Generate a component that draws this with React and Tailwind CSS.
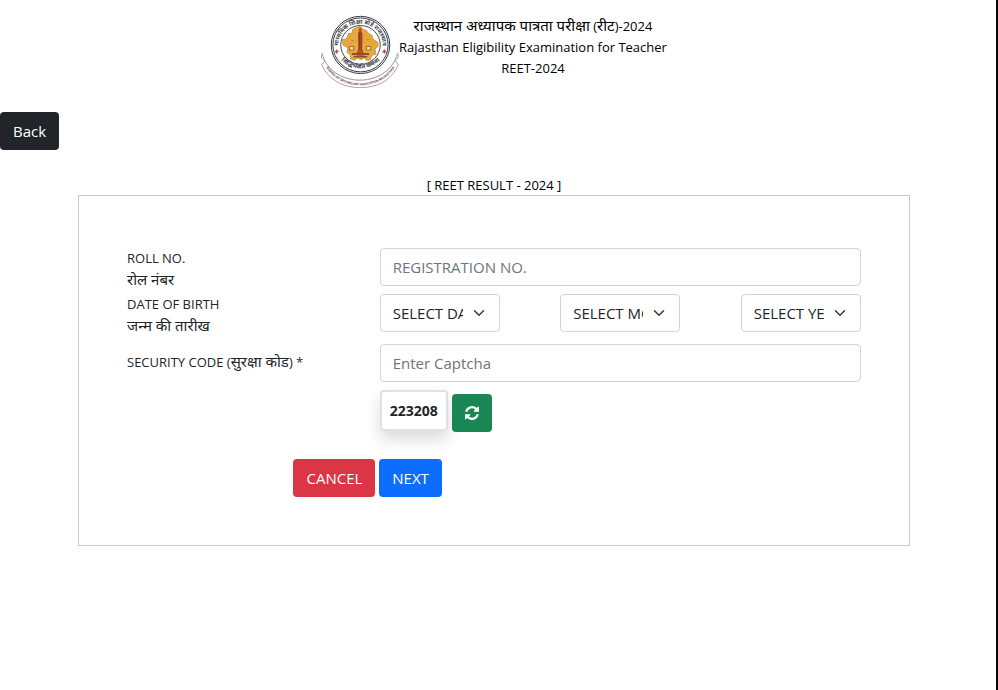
import React from 'react';

const controlClass = 'h-[38px] rounded border border-[#ced4da] bg-white px-3 text-[15px] leading-6 text-[#212529]';
const buttonClass = 'h-[38px] rounded border border-transparent bg-origin-border px-3 text-[15px] leading-6 text-white';

const selects = [
  { id: 'day', label: 'SELECT DAY' },
  { id: 'month', label: 'SELECT MONTH' },
  { id: 'year', label: 'SELECT YEAR' },
];

const Hindi = ({ children }) => <span lang="hi" className="text-[15px]">{children}</span>;

const BoardLogo = () => (
  <svg className="h-[74px] w-[78px] shrink-0" viewBox="15 13 237 225" role="img" aria-label="Board of Secondary Education Rajasthan">
    <defs>
      <path id="ringTop" d="M74 136 A67 66 0 1 1 196 136" />
      <path id="ringBottom" d="M60 126 A79 77 0 0 0 210 126" />
      <path id="ribbonText" d="M29 172 C72 249 196 249 241 172" />
    </defs>
    <path d="M18 133 C32 183 76 213 133 214 C192 213 234 180 248 133 L251 143 L241 154 L250 168 C226 218 186 236 133 237 C80 236 39 214 17 168 L26 156 L16 146 Z" fill="#fff" stroke="#8d9295" strokeWidth="2.5" />
    <path d="M26 156 C46 193 86 214 133 215 C182 214 222 191 241 154" fill="none" stroke="#aaa" strokeWidth="1.5" />
    <text fontFamily="Liberation Sans, sans-serif" fontWeight="700" fontSize="10" fill="#6c3035" textAnchor="middle">
      <textPath href="#ribbonText" startOffset="50%">BOARD OF SECONDARY EDUCATION RAJASTHAN</textPath>
    </text>
    <ellipse cx="135" cy="107" rx="89" ry="87" fill="#fff" stroke="#343840" strokeWidth="3" />
    <ellipse cx="135" cy="107" rx="84" ry="82" fill="none" stroke="#343840" strokeWidth="3" />
    <ellipse cx="135" cy="107" rx="60" ry="59" fill="#fff" stroke="#444950" strokeWidth="3" />
    <g fontFamily="Noto Sans, sans-serif" fontWeight="700" fontSize="18" fill="#3c3f48" textAnchor="middle">
      <text><textPath href="#ringTop" startOffset="50%">माध्यमिक शिक्षा बोर्ड राजस्थान</textPath></text>
      <text><textPath href="#ringBottom" startOffset="50%">सिद्धिर्भवति कर्मजा</textPath></text>
    </g>
    <path d="M57 127h11M62.500 121v12M202 127h11M207.500 121v12" stroke="#b6424b" strokeWidth="4" />
    <g transform="translate(-11 -7) scale(1.08)">
      <path d="M84 91 L96 88 L101 74 L112 72 L113 62 L126 55 L136 54 L142 62 L151 64 L158 73 L168 79 L170 89 L184 98 L185 109 L176 117 L179 132 L167 135 L163 148 L151 149 L148 141 L137 147 L126 143 L119 149 L107 145 L106 132 L97 127 L100 114 L86 106 Z" fill="#e6a73c" stroke="#b98a38" strokeWidth="2" />
      <path d="M132 57h5l2 12 2 6-1 42 4 9v10h-19v-10l4-9-1-42 2-7z" fill="#b95023" />
      <path d="M132 70v49M137 70v49" stroke="#713220" strokeWidth="2" />
      <path d="M111 128h48v6h-48zM116 137h38v4h-38z" fill="#8a4f2b" />
      <path d="M104 110h12v10h-12zM152 110h12v10h-12z" fill="#f6dfa4" stroke="#7a4b2a" strokeWidth="2" />
      <path d="M109 94h9M152 91h9" stroke="#c98430" strokeWidth="3" />
    </g>
  </svg>
);

const Header = () => (
  <header className="flex justify-center pt-[14px] text-black">
    <BoardLogo />
    <div className="pt-px text-center text-[13px] leading-[21px]">
      <p><Hindi>राजस्थान अध्यापक पात्रता परीक्षा</Hindi> (<Hindi>रीट</Hindi>)-2024</p>
      <p>Rajasthan Eligibility Examination for Teacher</p>
      <p>REET-2024</p>
    </div>
  </header>
);

const RefreshIcon = () => (
  <svg className="h-[14px] w-[14px]" viewBox="0 0 1536 1536" fill="currentColor" aria-hidden="true">
    <path d="M1511 928q0 5-1 7-64 268-268 434.5t-478 166.5q-146 0-282.5-55t-243.5-157l-129 129q-19 19-45 19t-45-19-19-45v-448q0-26 19-45t45-19h448q26 0 45 19t19 45-19 45l-137 137q71 66 161 102t187 36q134 0 250-65t186-179q11-17 53-117 8-23 30-23h192q13 0 22.5 9.5t9.5 22.5zm25-800v448q0 26-19 45t-45 19h-448q-26 0-45-19t-19-45 19-45l138-138q-148-137-349-137-134 0-250 65t-186 179q-11 17-53 117-8 23-30 23h-199q-13 0-22.5-9.5t-9.5-22.5v-7q65-268 270-434.5t480-166.5q146 0 284 55.5t245 156.5l130-129q19-19 45-19t45 19 19 45z" />
  </svg>
);

const DateSelect = ({ id, label }) => (
  <div className="grid w-1/4">
    <select id={id} aria-label={label} className={`${controlClass} col-start-1 row-start-1 w-full appearance-none pr-9`}>
      <option>{label}</option>
    </select>
    <svg className="pointer-events-none col-start-1 row-start-1 mr-[15px] h-3 w-3 self-center justify-self-end" viewBox="0 0 16 16" fill="none" stroke="#343a40" strokeWidth="2" strokeLinecap="round" strokeLinejoin="round" aria-hidden="true">
      <path d="m2 5 6 6 6-6" />
    </svg>
  </div>
);

const ResultForm = () => (
  <form className="border border-[#c8c8c8] px-9 pt-[52px] pb-12 text-[#212529]" onSubmit={(e) => e.preventDefault()}>
    <div className="grid grid-cols-3">
      <label htmlFor="roll" className="h-[46px] px-3 text-[13px] leading-[21px]">
        ROLL NO.<br /><Hindi>रोल नंबर</Hindi>
      </label>
      <div className="col-span-2 px-3">
        <input id="roll" type="text" placeholder="REGISTRATION NO." className={`${controlClass} w-full placeholder:text-[#6c757d]`} />
      </div>

      <label htmlFor="day" className="h-[50px] px-3 text-[13px] leading-[21px]">
        DATE OF BIRTH<br /><Hindi>जन्म की तारीख</Hindi>
      </label>
      <div className="col-span-2 flex items-start justify-between px-3">
        {selects.map((s) => (
          <DateSelect key={s.id} id={s.id} label={s.label} />
        ))}
      </div>

      <label htmlFor="captcha" className="px-3 pt-[7px] text-[13px] leading-[21px]">
        SECURITY CODE (<Hindi>सुरक्षा कोड</Hindi>) *
      </label>
      <div className="col-span-2 px-3">
        <input id="captcha" type="text" placeholder="Enter Captcha" className={`${controlClass} w-full placeholder:text-[#6c757d]`} />
        <div className="flex items-start gap-1 pt-2">
          <span className="rounded border-2 border-[#dee2e6] bg-white p-2 text-[14px] leading-[21px] font-bold shadow-[0_8px_16px_rgba(0,0,0,0.15)]">223208</span>
          <button type="button" aria-label="Refresh captcha" className={`${buttonClass} mt-1 bg-[#198754]`}>
            <RefreshIcon />
          </button>
        </div>
      </div>

      <div className="col-span-2 flex justify-center gap-1 pt-[27px]">
        <button type="reset" className={`${buttonClass} bg-[#dc3545]`}>CANCEL</button>
        <button type="submit" className={`${buttonClass} bg-[#0d6efd]`}>NEXT</button>
      </div>
    </div>
  </form>
);

const App = () => {
  return (
    <div className="min-h-screen border-r-2 border-[#08080c] bg-white pr-2 font-['Open_Sans','Noto_Sans',sans-serif]">
      <Header />
      <button type="button" className={`${buttonClass} mt-6 bg-[#212529]`}>Back</button>
      <main className="px-[78px] pt-[25px]">
        <h1 className="text-center text-[13px] leading-5 text-black">[ REET RESULT - 2024 ]</h1>
        <ResultForm />
      </main>
    </div>
  );
};

export default App;
